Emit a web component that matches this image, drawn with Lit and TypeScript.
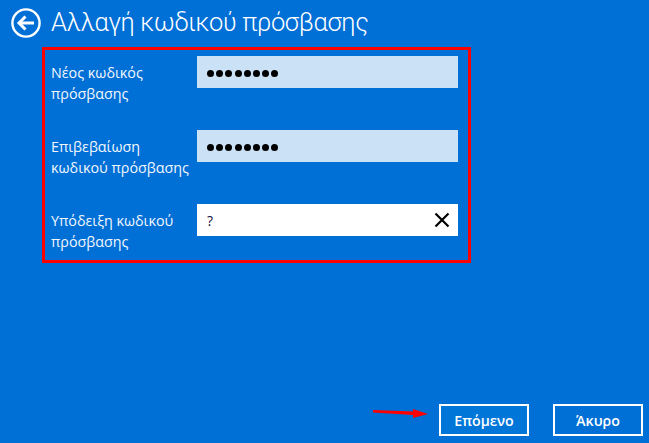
import { LitElement, css, html } from 'lit';
import { customElement } from 'lit/decorators.js';

@customElement('app-root')
export class AppRoot extends LitElement {
  static get styles() {
    return css`
      :host {
        display: flex;
        flex-direction: column;
        position: relative;
        height: 443px;
        background: #006fd6;
        color: #fff;
        font-family: "Open Sans", "Noto Sans", sans-serif;
        overflow: hidden;
      }
      .header {
        display: flex;
        align-items: center;
        gap: 10px;
        height: 47px;
        padding: 0 0 2px 11px;
        box-sizing: border-box;
      }
      .back {
        width: 30px;
        height: 30px;
        flex: none;
      }
      .title {
        font-family: Roboto, "Open Sans", sans-serif;
        font-size: 25.5px;
        font-weight: 300;
        letter-spacing: -0.35px;
        line-height: 45px;
        white-space: nowrap;
      }
      .box {
        margin-left: 42px;
        width: 429px;
        height: 216px;
        box-sizing: border-box;
        border: 3px solid #f00;
        padding: 6px 10px 0 6px;
        display: flex;
        flex-direction: column;
        gap: 20px;
      }
      .row {
        display: grid;
        grid-template-columns: 146px 261px;
        height: 54px;
        flex: none;
      }
      .label {
        font-size: 14.3px;
        line-height: 21px;
        padding-top: 6px;
        color: #f2f7fc;
        white-space: nowrap;
      }
      .field {
        height: 32px;
        background: #cbe1f6;
        color: #000;
        display: flex;
        align-items: center;
        padding: 0 8px 0 10px;
        box-sizing: border-box;
      }
      .field.active {
        background: #fff;
        justify-content: space-between;
      }
      .dots {
        display: flex;
        gap: 2.2px;
        padding-top: 2px;
      }
      .dot {
        width: 7px;
        height: 7px;
        border-radius: 50%;
        background: #000;
      }
      .hint {
        font-size: 14px;
        color: #101040;
      }
      .clear {
        width: 16px;
        height: 16px;
      }
      .footer {
        margin-top: auto;
        display: flex;
        justify-content: flex-end;
        gap: 24px;
        padding: 0 6px 7px 0;
      }
      .btn {
        width: 90px;
        height: 32px;
        box-sizing: border-box;
        border: 2px solid #fff;
        background: #0076d9;
        color: #fff;
        font-family: inherit;
        font-size: 14.2px;
        font-weight: 600;
        padding: 0;
      }
      .btn.cancel {
        background: #006fd6;
      }
      .arrow {
        position: absolute;
        left: 373px;
        top: 407px;
        width: 56px;
        height: 14px;
      }
    `;
  }

  renderDots() {
    return html`<div class="dots">${Array.from({ length: 8 }, () => html`<span class="dot"></span>`)}</div>`;
  }

  render() {
    return html`
      <div class="header">
        <svg class="back" viewBox="0 0 30 30" fill="none" stroke="#fff">
          <circle cx="15" cy="15" r="13.6" stroke-width="2.4"></circle>
          <path d="M8 15H23" stroke-width="3"></path>
          <path d="M14.5 8.5L8 15L14.5 21.5" stroke-width="3"></path>
        </svg>
        <div class="title">Αλλαγή κωδικού πρόσβασης</div>
      </div>
      <div class="box">
        <div class="row">
          <div class="label">Νέος κωδικός<br />πρόσβασης</div>
          <div class="field">${this.renderDots()}</div>
        </div>
        <div class="row">
          <div class="label">Επιβεβαίωση<br />κωδικού πρόσβασης</div>
          <div class="field">${this.renderDots()}</div>
        </div>
        <div class="row">
          <div class="label">Υπόδειξη κωδικού<br />πρόσβασης</div>
          <div class="field active">
            <span class="hint">?</span>
            <svg class="clear" viewBox="0 0 16 16" stroke="#000" stroke-width="2.2">
              <path d="M1.5 1.5L14.5 14.5M14.5 1.5L1.5 14.5"></path>
            </svg>
          </div>
        </div>
      </div>
      <div class="footer">
        <button class="btn">Επόμενο</button>
        <button class="btn cancel">Άκυρο</button>
      </div>
      <svg class="arrow" viewBox="0 0 56 14">
        <path d="M0 3L40 4.5V2L55 7L40 11V8L0 5.5Z" fill="#f00"></path>
      </svg>
    `;
  }
}
